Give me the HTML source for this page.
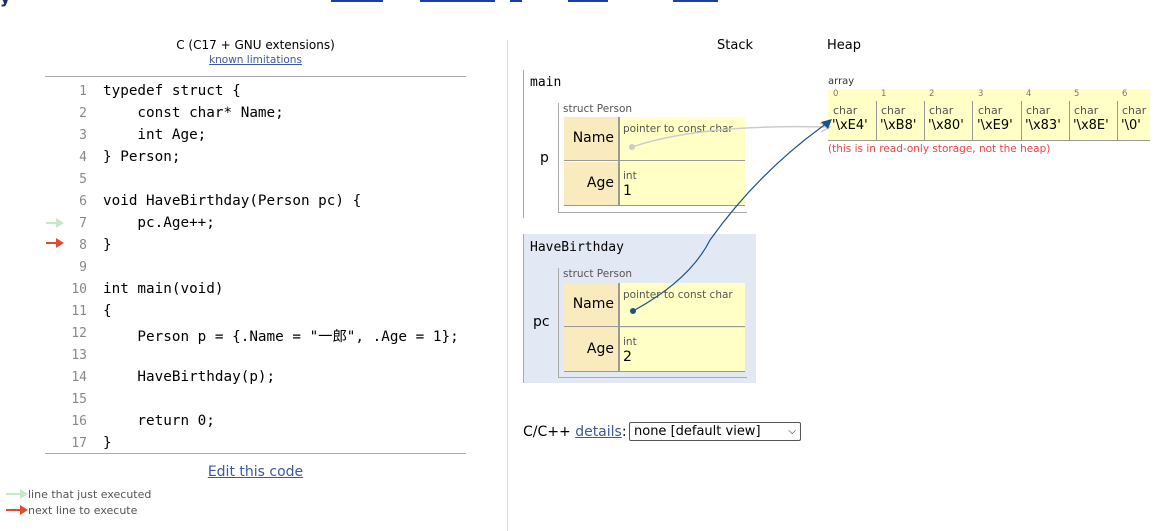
<!DOCTYPE html>
<html><head><meta charset="utf-8"><style>
body{margin:0;width:1159px;height:531px;overflow:hidden;background:#fff;font-family:"DejaVu Sans","Liberation Sans",sans-serif;position:relative;color:#000}
.a{position:absolute;white-space:pre}
.code{font-family:"DejaVu Sans Mono","Liberation Mono",monospace;font-size:13px}
.src .a{font-size:14.3px}
.src .ln{font-size:13px}
.ln{color:#888;width:30px;text-align:right;left:57px}
a,.lk{color:#3d58a2;text-decoration:underline}
.lab{background:#faebbf;text-align:right;font-size:14px;padding-right:4px!important}
.val{background:#ffffc6;vertical-align:top}
.sm{font-size:10px;color:#555}
</style></head><body>
<div class="a" style="left:0;top:-12px;font-size:16px;color:#1a2a6b;font-weight:bold">y</div>
<div class="a" style="left:331px;top:0;width:52px;height:2px;background:#1a3fa8"></div>
<div class="a" style="left:420px;top:0;width:75px;height:2px;background:#1a3fa8"></div>
<div class="a" style="left:510px;top:0;width:12px;height:2px;background:#1a3fa8"></div>
<div class="a" style="left:568px;top:0;width:40px;height:2px;background:#1a3fa8"></div>
<div class="a" style="left:673px;top:0;width:45px;height:2px;background:#1a3fa8"></div>

<div class="a" style="left:45px;width:421px;top:38px;text-align:center;font-size:12px">C (C17 + GNU extensions)</div>
<div class="a lk" style="left:45px;width:421px;top:54px;text-align:center;font-size:10.5px">known limitations</div>
<div class="a" style="left:45px;top:76px;width:421px;height:1px;background:#aaa"></div>
<div class="a" style="left:45px;top:453px;width:421px;height:1px;background:#aaa"></div>

<div class="code src">
<div class="a ln" style="top:84px">1</div><div class="a" style="left:103px;top:83px">typedef struct {</div>
<div class="a ln" style="top:106px">2</div><div class="a" style="left:103px;top:105px">    const char* Name;</div>
<div class="a ln" style="top:128px">3</div><div class="a" style="left:103px;top:127px">    int Age;</div>
<div class="a ln" style="top:150px">4</div><div class="a" style="left:103px;top:149px">} Person;</div>
<div class="a ln" style="top:172px">5</div>
<div class="a ln" style="top:194px">6</div><div class="a" style="left:103px;top:193px">void HaveBirthday(Person pc) {</div>
<div class="a ln" style="top:216px">7</div><div class="a" style="left:103px;top:215px">    pc.Age++;</div>
<div class="a ln" style="top:238px">8</div><div class="a" style="left:103px;top:237px">}</div>
<div class="a ln" style="top:260px">9</div>
<div class="a ln" style="top:282px">10</div><div class="a" style="left:103px;top:281px">int main(void)</div>
<div class="a ln" style="top:304px">11</div><div class="a" style="left:103px;top:303px">{</div>
<div class="a ln" style="top:326px">12</div><div class="a" style="left:103px;top:325px;font-family:'DejaVu Sans Mono','Noto Sans CJK JP',monospace">    Person p = {.Name = "一郎", .Age = 1};</div>
<div class="a ln" style="top:348px">13</div>
<div class="a ln" style="top:370px">14</div><div class="a" style="left:103px;top:369px">    HaveBirthday(p);</div>
<div class="a ln" style="top:392px">15</div>
<div class="a ln" style="top:414px">16</div><div class="a" style="left:103px;top:413px">    return 0;</div>
<div class="a ln" style="top:436px">17</div><div class="a" style="left:103px;top:435px">}</div>
</div>
<svg class="a" style="left:0;top:0" width="520" height="531">
<path d="M46 222h10v-4l8 5-8 5v-4h-10z" fill="#c9e6ca"/>
<path d="M46 242h10v-4l8 5-8 5v-4h-10z" fill="#e04a2e"/>
<path d="M6 493h14v-4l8 5-8 5v-4h-14z" fill="#c9e6ca"/>
<path d="M6 509h14v-4l8 5-8 5v-4h-14z" fill="#e04a2e"/>
</svg>
<div class="a lk" style="left:45px;width:421px;top:464px;text-align:center;font-size:14px">Edit this code</div>
<div class="a" style="left:28px;top:488px;font-size:11px;color:#555">line that just executed</div>
<div class="a" style="left:28px;top:504px;font-size:11px;color:#555">next line to execute</div>

<div class="a" style="left:507px;top:40px;width:1px;height:491px;background:#ddd"></div>
<div class="a" style="left:717px;top:38px;font-size:13px">Stack</div>
<div class="a" style="left:827px;top:38px;font-size:13px">Heap</div>

<div class="a" style="left:523px;top:70px;width:1px;height:148px;background:#aaa"></div>
<div class="a code" style="left:530px;top:75px">main</div>
<div class="a" style="left:540px;top:150px;font-size:14px">p</div>
<div class="a" style="left:558px;top:103px;width:1px;height:110px;background:#aaa"></div>
<div class="a" style="left:558px;top:212px;width:189px;height:1px;background:#aaa"></div>
<div class="a sm" style="left:563px;top:103px;font-size:10.5px">struct Person</div>
<div class="a" style="left:564px;top:117px;width:181px;height:89px">
 <div class="a lab" style="left:0;top:0;width:50px;height:43px;line-height:43px;border-bottom:1px solid #999">Name</div>
 <div class="a" style="left:54px;top:0;width:2px;height:89px;background:#999"></div>
 <div class="a val" style="left:56px;top:0;width:125px;height:43px;border-bottom:1px solid #999"><span class="sm" style="position:absolute;left:3px;top:6px;font-size:10.5px">pointer to const char</span></div>
 <div class="a lab" style="left:0;top:45px;width:50px;height:43px;line-height:43px;border-bottom:1px solid #999">Age</div>
 <div class="a val" style="left:56px;top:45px;width:125px;height:43px;border-bottom:1px solid #999"><span class="sm" style="position:absolute;left:3px;top:8px;font-size:10.5px">int</span><span style="position:absolute;left:3px;top:21px;font-size:14px">1</span></div>
</div>

<div class="a" style="left:523px;top:234px;width:232px;height:149px;background:#e2e9f5;border-left:1px solid #aaa"></div>
<div class="a code" style="left:530px;top:240px">HaveBirthday</div>
<div class="a" style="left:533px;top:314px;font-size:14px">pc</div>
<div class="a" style="left:558px;top:268px;width:1px;height:110px;background:#aaa"></div>
<div class="a" style="left:558px;top:377px;width:189px;height:1px;background:#aaa"></div>
<div class="a sm" style="left:563px;top:268px;font-size:10.5px">struct Person</div>
<div class="a" style="left:564px;top:283px;width:181px;height:89px">
 <div class="a lab" style="left:0;top:0;width:50px;height:43px;line-height:43px;border-bottom:1px solid #999">Name</div>
 <div class="a" style="left:54px;top:0;width:2px;height:89px;background:#999"></div>
 <div class="a val" style="left:56px;top:0;width:125px;height:43px;border-bottom:1px solid #999"><span class="sm" style="position:absolute;left:3px;top:6px;font-size:10.5px">pointer to const char</span></div>
 <div class="a lab" style="left:0;top:45px;width:50px;height:43px;line-height:43px;border-bottom:1px solid #999">Age</div>
 <div class="a val" style="left:56px;top:45px;width:125px;height:43px;border-bottom:1px solid #999"><span class="sm" style="position:absolute;left:3px;top:8px;font-size:10.5px">int</span><span style="position:absolute;left:3px;top:21px;font-size:14px">2</span></div>
</div>

<div class="a sm" style="left:828px;top:76px;font-size:10px;color:#333">array</div>
<div class="a" style="left:828px;top:89px;width:322px;height:51px;background:#ffffc6;border-bottom:1px solid #999"></div>
<div class="a" style="left:828px;top:89px;font-size:8.5px;color:#777"><span class="a" style="left:5px;top:0">0</span><span class="a" style="left:53px;top:0">1</span><span class="a" style="left:101px;top:0">2</span><span class="a" style="left:150px;top:0">3</span><span class="a" style="left:198px;top:0">4</span><span class="a" style="left:246px;top:0">5</span><span class="a" style="left:294px;top:0">6</span></div>
<div class="a" style="left:828px;top:101px">
<div class="a" style="left:48px;top:0;width:1px;height:39px;background:#999"></div>
<div class="a" style="left:96px;top:0;width:1px;height:39px;background:#999"></div>
<div class="a" style="left:144px;top:0;width:1px;height:39px;background:#999"></div>
<div class="a" style="left:193px;top:0;width:1px;height:39px;background:#999"></div>
<div class="a" style="left:241px;top:0;width:1px;height:39px;background:#999"></div>
<div class="a" style="left:289px;top:0;width:1px;height:39px;background:#999"></div>
<span class="a sm" style="left:5px;top:3px;font-size:11px">char</span><span class="a" style="left:4px;top:17px;font-size:13px">'\xE4'</span>
<span class="a sm" style="left:53px;top:3px;font-size:11px">char</span><span class="a" style="left:52px;top:17px;font-size:13px">'\xB8'</span>
<span class="a sm" style="left:101px;top:3px;font-size:11px">char</span><span class="a" style="left:100px;top:17px;font-size:13px">'\x80'</span>
<span class="a sm" style="left:150px;top:3px;font-size:11px">char</span><span class="a" style="left:149px;top:17px;font-size:13px">'\xE9'</span>
<span class="a sm" style="left:198px;top:3px;font-size:11px">char</span><span class="a" style="left:197px;top:17px;font-size:13px">'\x83'</span>
<span class="a sm" style="left:246px;top:3px;font-size:11px">char</span><span class="a" style="left:245px;top:17px;font-size:13px">'\x8E'</span>
<span class="a sm" style="left:294px;top:3px;font-size:11px">char</span><span class="a" style="left:293px;top:17px;font-size:13px">'\0'</span>
</div>
<div class="a" style="left:828px;top:143px;font-size:10.5px;color:#e44">(this is in read-only storage, not the heap)</div>

<svg class="a" style="left:0;top:0" width="1159" height="531">
<path d="M632 147 Q700 124 826 127" fill="none" stroke="#ccc" stroke-width="1.5"/>
<circle cx="632" cy="147" r="3" fill="#ccc"/>
<path d="M820 123 L830 127 L821 132" fill="none" stroke="#ccc" stroke-width="1.5"/>
<path d="M633 311 Q690 280 710 240 Q760 170 830 121" fill="none" stroke="#1d5384" stroke-width="1.2"/>
<circle cx="633" cy="311" r="3" fill="#1d5384"/>
<path d="M821 122 L832 119 L828 129 Z" fill="#1d5384"/>
</svg>

<div class="a" style="left:523px;top:424px;font-size:14px">C/C++ <span class="lk">details</span>:</div>
<div class="a" style="left:629px;top:422px;width:166px;height:17px;border:1px solid #555;border-radius:2px;font-size:13px;line-height:17px;padding-left:4px">none [default view]<span style="position:absolute;right:4px;top:0;font-size:10px">&#9013;</span></div>
</body></html>
